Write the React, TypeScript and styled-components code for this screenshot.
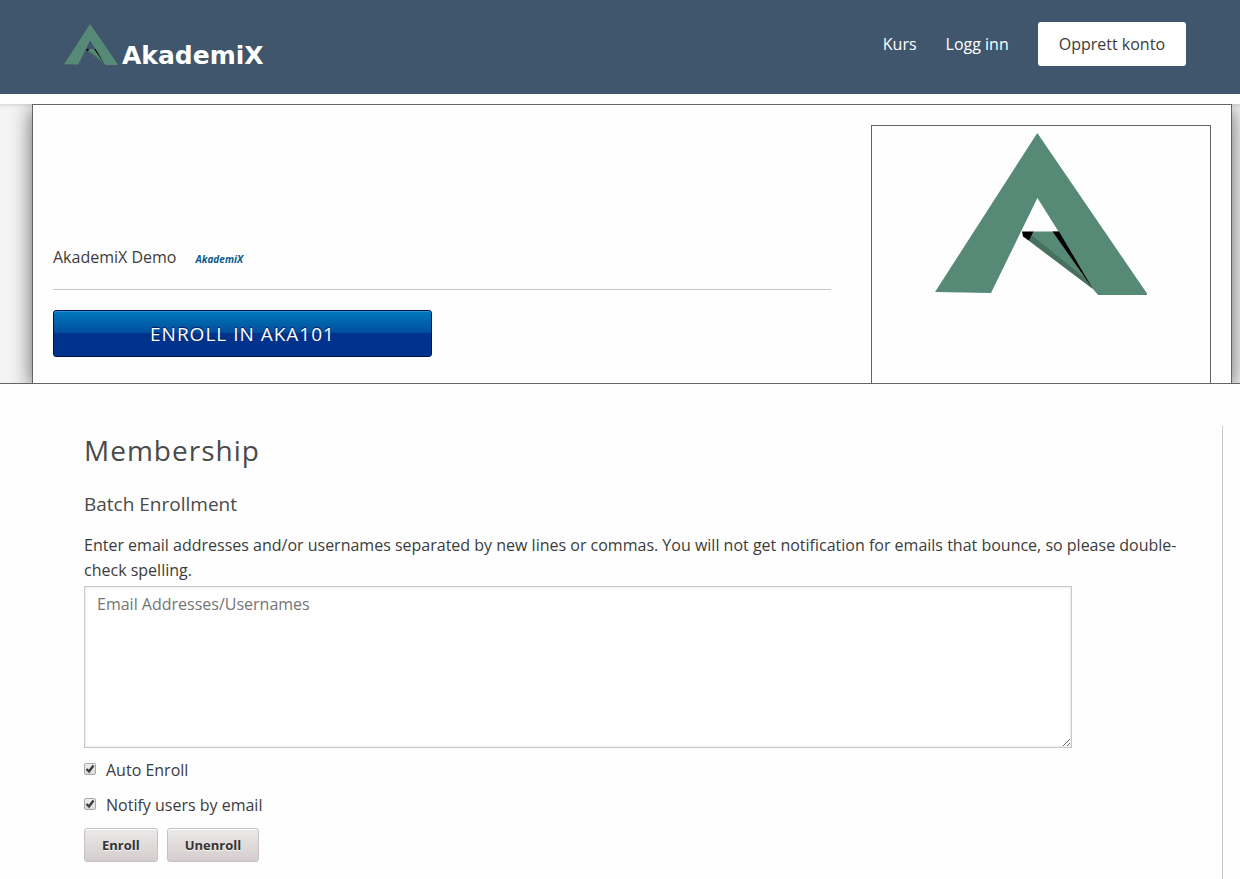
import React from "react";
import styled, { createGlobalStyle } from "styled-components";

const GlobalStyle = createGlobalStyle`
  * { box-sizing: border-box; }
  body {
    margin: 0;
    background: #fefefe;
    color: #3c3c3c;
    font-family: "Open Sans", sans-serif;
    font-size: 16px;
    line-height: 25px;
  }
  #root { display: flex; flex-direction: column; min-height: 100vh; }
`;

const Header = styled.header`
  display: flex;
  align-items: flex-start;
  justify-content: space-between;
  margin-bottom: 10px;
  padding: 22px 54px 28px 64px;
  background: #3f566d;
`;

const Brand = styled.a`
  display: flex;
  align-items: flex-end;
  gap: 4px;
  padding-top: 2px;
  color: #fff;
  font: bold 25px/18px "DejaVu Sans", sans-serif;
  text-decoration: none;
`;

const Nav = styled.nav`
  display: flex;
  align-items: center;
  gap: 29px;
`;

const NavLink = styled.a<{ $solid?: boolean }>`
  padding: ${(p) => (p.$solid ? "0 21px" : "0")};
  border-radius: 3px;
  background: ${(p) => (p.$solid ? "#fff" : "transparent")};
  color: ${(p) => (p.$solid ? "#3c3c3c" : "#fff")};
  line-height: 44px;
  text-decoration: none;
`;

const Banner = styled.section`
  padding: 0 8px 0 32px;
  border-bottom: 1px solid #646464;
  background: #f4f4f4;
  overflow: hidden;
  box-shadow: inset 0 5px 5px -5px rgba(0, 0, 0, 0.2);
`;

const Course = styled.div`
  display: flex;
  gap: 40px;
  padding: 20px 20px 0;
  border: 1px solid #646464;
  border-bottom: 0;
  background: #fefefe;
  box-shadow: 0 5px 20px rgba(0, 0, 0, 0.6);
`;

const Intro = styled.div`
  flex: 1;
  display: flex;
  flex-direction: column;
  align-items: flex-start;
  justify-content: flex-end;
  padding-bottom: 26px;
`;

const CourseTitle = styled.div`
  display: flex;
  align-items: baseline;
  gap: 19px;
  width: 100%;
  margin-bottom: 20px;
  padding-bottom: 19px;
  border-bottom: 1px solid #c8c8c8;
`;

const CourseName = styled.h1`
  margin: 0;
  font-size: 16px;
  font-weight: 400;
`;

const OrgLink = styled.a`
  color: #0a5c8c;
  font-size: 10px;
  font-style: italic;
  font-weight: 700;
  line-height: 20px;
  text-decoration: none;
`;

const EnrollButton = styled.button`
  width: 379px;
  height: 47px;
  padding: 2px 0 0;
  border: 1px solid #00104f;
  border-radius: 3px;
  background: linear-gradient(#0079bc, #004d9c 50%, #00348c 50%, #00348c);
  box-shadow: inset 0 1px 0 #2e8fd0;
  color: #fff;
  font: 400 19px/25px "Open Sans", sans-serif;
  letter-spacing: 1px;
  text-shadow: 0 -1px 1px #00104f;
  text-transform: uppercase;
`;

const Media = styled.div`
  display: flex;
  justify-content: center;
  width: 340px;
  height: 258px;
  padding-top: 7px;
  border: 1px solid #646464;
  border-bottom: 0;
`;

const Main = styled.main`
  flex: 1;
  margin: 42px 17px 0 84px;
  padding: 6px 40px 17px 0;
  border-right: 1px solid #c8c8c8;
`;

const Title = styled.h2`
  margin: 0 0 25px;
  color: #4a4a4a;
  font-size: 28px;
  font-weight: 400;
  letter-spacing: 1px;
  line-height: 36px;
`;

const Subtitle = styled.h3`
  margin: 0 0 18px;
  color: #4a4a4a;
  font-size: 19px;
  font-weight: 400;
  line-height: 22px;
`;

const Hint = styled.label`
  display: block;
  margin-bottom: 3px;
`;

const Emails = styled.textarea`
  display: block;
  width: 90%;
  height: 162px;
  margin-bottom: 10px;
  padding: 5px 12px;
  border: 1px solid #c8c8c8;
  background: #fff;
  box-shadow: inset 0 0 3px rgba(0, 0, 0, 0.15);
  color: #3c3c3c;
  font: 400 16px/25px "Open Sans", sans-serif;
  resize: both;
  &::placeholder { color: #757575; }
`;

const Option = styled.label`
  display: flex;
  align-items: center;
  gap: 10px;
  margin-bottom: 10px;
`;

const Checkbox = styled.input`
  appearance: none;
  width: 12px;
  height: 12px;
  margin: 0;
  border: 1px solid #a8a8a8;
  border-radius: 2px;
  background: linear-gradient(#eee, #dcdcdc);
`;

const CheckBoxArea = styled.span`
  display: grid;
  margin-bottom: 3px;
  & > * { grid-area: 1 / 1; }
  & > svg { pointer-events: none; }
  & > input:not(:checked) + svg { visibility: hidden; }
`;

const Actions = styled.div`
  display: flex;
  gap: 9px;
`;

const ActionButton = styled.button`
  height: 34px;
  padding: 0 17px;
  border: 1px solid #c8c0c0;
  border-radius: 3px;
  background: linear-gradient(#ebe9e9, #d5cdcd);
  box-shadow: inset 0 1px 0 #fff;
  color: #333;
  font: 700 13px/20px "Open Sans", sans-serif;
  text-shadow: 0 1px 0 #f8f8f8;
`;

function Emblem({ width, height }: { width: number; height: number }) {
  return (
    <svg width={width} height={height} viewBox="0 0 212 162" preserveAspectRatio="none" aria-hidden="true">
      <path fill="#578a76" d="M102.3 0 212 160.5V162H163L158 156 94 107.7 98 98.5H123.5L102.4 65 56 160 0 159Z" />
      <path fill="#47705f" d="M97 102.5 94 107.7 158 156 150 145Z" />
      <path d="M87 98.5H98.5L94 107.7 88 103.5Z" />
      <path d="M117.5 98.5H124L158 156Z" />
    </svg>
  );
}

function CheckOption({ children }: { children: React.ReactNode }) {
  return (
    <Option>
      <CheckBoxArea>
        <Checkbox type="checkbox" defaultChecked />
        <svg width="12" height="12" viewBox="0 0 12 12" aria-hidden="true">
          <path d="M2.5 6 5 8.5 9.5 2.5" fill="none" stroke="#3c3c3c" strokeWidth="2.3" />
        </svg>
      </CheckBoxArea>
      {children}
    </Option>
  );
}

export default function App() {
  return (
    <>
      <GlobalStyle />
      <Header>
        <Brand href="#">
          <Emblem width={54} height={41} />
          AkademiX
        </Brand>
        <Nav>
          <NavLink href="#">Kurs</NavLink>
          <NavLink href="#">Logg inn</NavLink>
          <NavLink href="#" $solid>Opprett konto</NavLink>
        </Nav>
      </Header>
      <Banner>
        <Course>
          <Intro>
            <CourseTitle>
              <CourseName>AkademiX Demo</CourseName>
              <OrgLink href="#">AkademiX</OrgLink>
            </CourseTitle>
            <EnrollButton type="button">Enroll in AKA101</EnrollButton>
          </Intro>
          <Media>
            <Emblem width={212} height={162} />
          </Media>
        </Course>
      </Banner>
      <Main>
        <Title>Membership</Title>
        <Subtitle>Batch Enrollment</Subtitle>
        <Hint htmlFor="emails">
          Enter email addresses and/or usernames separated by new lines or commas. You will not get
          notification for emails that bounce, so please double-check spelling.
        </Hint>
        <Emails id="emails" placeholder="Email Addresses/Usernames" />
        <CheckOption>Auto Enroll</CheckOption>
        <CheckOption>Notify users by email</CheckOption>
        <Actions>
          <ActionButton type="button">Enroll</ActionButton>
          <ActionButton type="button">Unenroll</ActionButton>
        </Actions>
      </Main>
    </>
  );
}
